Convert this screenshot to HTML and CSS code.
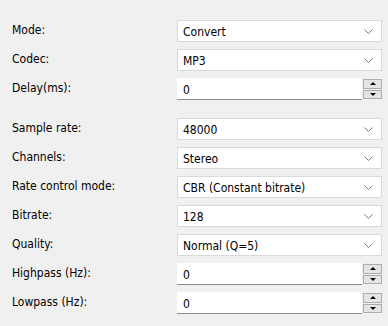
FILE: index.html
```html
<!DOCTYPE html>
<html>
<head>
<meta charset="utf-8">
<link rel="stylesheet" href="styles.css">
</head>
<body>
<div class="form">
  <div class="group">
    <div class="row"><span class="label">Mode:</span><div class="combo"><span>Convert</span><svg class="chev" width="9" height="5" viewBox="0 0 9 5"><path d="M0.5 0.5 L4.5 4.5 L8.5 0.5" fill="none" stroke="#7a7a7a" stroke-width="1"/></svg></div></div>
    <div class="row"><span class="label">Codec:</span><div class="combo"><span>MP3</span><svg class="chev" width="9" height="5" viewBox="0 0 9 5"><path d="M0.5 0.5 L4.5 4.5 L8.5 0.5" fill="none" stroke="#7a7a7a" stroke-width="1"/></svg></div></div>
    <div class="row"><span class="label">Delay(ms):</span><div class="spin"><div class="field">0</div><div class="btns"><div class="btn"><span class="up"></span></div><div class="btn"><span class="down"></span></div></div></div></div>
  </div>
  <div class="group">
    <div class="row"><span class="label">Sample rate:</span><div class="combo"><span>48000</span><svg class="chev" width="9" height="5" viewBox="0 0 9 5"><path d="M0.5 0.5 L4.5 4.5 L8.5 0.5" fill="none" stroke="#7a7a7a" stroke-width="1"/></svg></div></div>
    <div class="row"><span class="label">Channels:</span><div class="combo"><span>Stereo</span><svg class="chev" width="9" height="5" viewBox="0 0 9 5"><path d="M0.5 0.5 L4.5 4.5 L8.5 0.5" fill="none" stroke="#7a7a7a" stroke-width="1"/></svg></div></div>
    <div class="row"><span class="label">Rate control mode:</span><div class="combo"><span>CBR (Constant bitrate)</span><svg class="chev" width="9" height="5" viewBox="0 0 9 5"><path d="M0.5 0.5 L4.5 4.5 L8.5 0.5" fill="none" stroke="#7a7a7a" stroke-width="1"/></svg></div></div>
    <div class="row"><span class="label">Bitrate:</span><div class="combo"><span>128</span><svg class="chev" width="9" height="5" viewBox="0 0 9 5"><path d="M0.5 0.5 L4.5 4.5 L8.5 0.5" fill="none" stroke="#7a7a7a" stroke-width="1"/></svg></div></div>
    <div class="row"><span class="label">Quality:</span><div class="combo"><span>Normal (Q=5)</span><svg class="chev" width="9" height="5" viewBox="0 0 9 5"><path d="M0.5 0.5 L4.5 4.5 L8.5 0.5" fill="none" stroke="#7a7a7a" stroke-width="1"/></svg></div></div>
    <div class="row"><span class="label">Highpass (Hz):</span><div class="spin"><div class="field">0</div><div class="btns"><div class="btn"><span class="up"></span></div><div class="btn"><span class="down"></span></div></div></div></div>
    <div class="row"><span class="label">Lowpass (Hz):</span><div class="spin"><div class="field">0</div><div class="btns"><div class="btn"><span class="up"></span></div><div class="btn"><span class="down"></span></div></div></div></div>
  </div>
</div>
</body>
</html>
```
FILE: styles.css
```css
html, body {
  margin: 0;
  padding: 0;
  background: #f0f0f0;
  width: 388px;
  height: 326px;
  overflow: hidden;
}
body {
  font-family: "DejaVu Sans Condensed", "DejaVu Sans", sans-serif;
  font-size: 12px;
  color: #000;
}
.form {
  display: flex;
  flex-direction: column;
  gap: 18px;
  padding: 20px 6px 0 12px;
}
.group {
  display: flex;
  flex-direction: column;
  gap: 7px;
}
.row {
  display: flex;
  align-items: flex-start;
  height: 22px;
}
.label {
  width: 165px;
  flex: none;
  line-height: 14px;
  padding-top: 3px;
}
.combo {
  flex: 1;
  box-sizing: border-box;
  height: 22px;
  background: #fff;
  border: 1px solid #d9d9d9;
  display: flex;
  align-items: center;
  justify-content: space-between;
  padding: 0 5px 0 5px;
  line-height: 14px;
}
.combo span { padding-top: 2px; }
.chev { margin-right: 3px; margin-top: 1px; }
.spin {
  flex: 1;
  display: flex;
  height: 22px;
  box-sizing: border-box;
}
.field {
  flex: 1;
  box-sizing: border-box;
  height: 22px;
  background: #fff;
  border-bottom: 1px solid #8c8c8c;
  padding: 5px 0 0 6px;
  line-height: 14px;
}
.btns {
  width: 20px;
  box-sizing: border-box;
  padding: 1px 0 1px 1px;
  display: flex;
  flex-direction: column;
  gap: 1px;
  height: 22px;
}
.btn {
  flex: 1;
  box-sizing: border-box;
  border: 1px solid #adadad;
  background: #e5e5e5;
  display: flex;
  align-items: center;
  justify-content: center;
}
.up, .down {
  width: 0;
  height: 0;
  border-left: 3px solid transparent;
  border-right: 3px solid transparent;
}
.up { border-bottom: 3px solid #000; }
.down { border-top: 3px solid #000; }
```
